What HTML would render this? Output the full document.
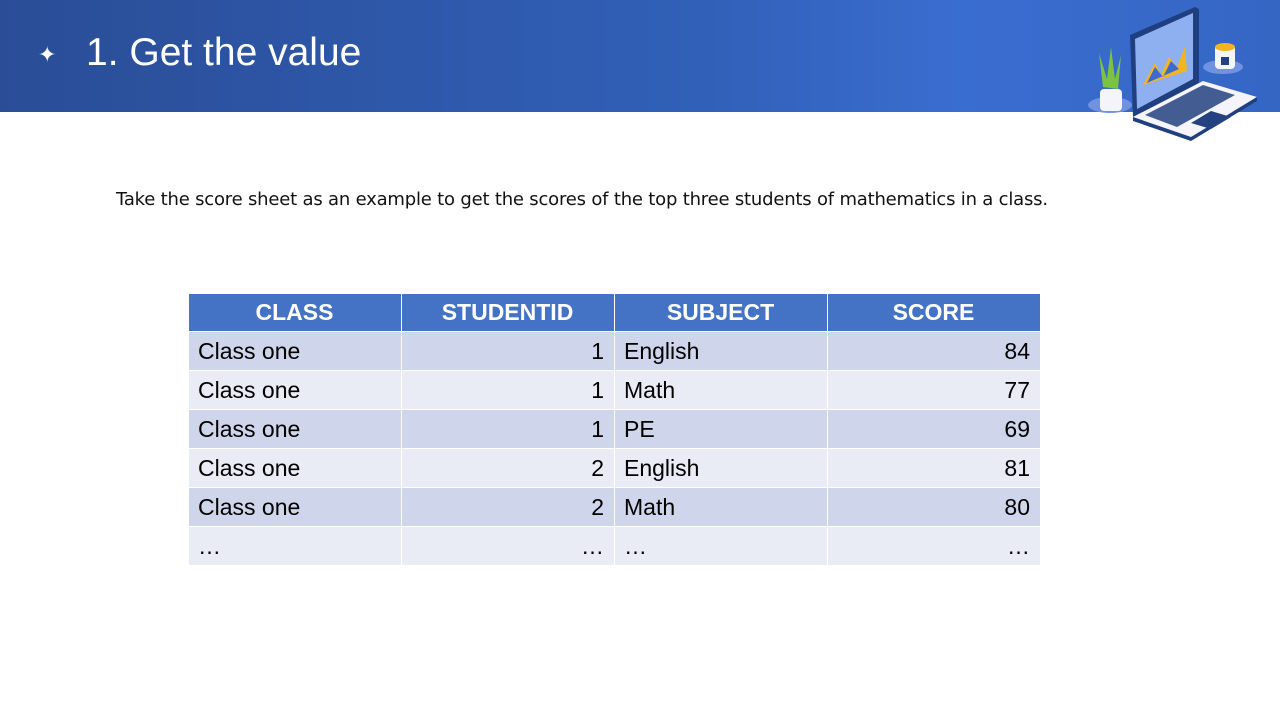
<!DOCTYPE html>
<html><head><meta charset="utf-8"><style>
body{margin:0;width:1280px;height:720px;background:#fff;position:relative;overflow:hidden;font-family:"Liberation Sans",sans-serif}
.hdr{position:absolute;left:0;top:0;width:1280px;height:112px;background:linear-gradient(90deg,#2a4d96 0%,#3160b8 55%,#3a6dd0 75%,#3566c4 100%)}
.title{position:absolute;left:86px;top:31px;color:#fff;font-size:39px;font-family:"Liberation Sans",sans-serif}
.star{position:absolute;left:38px;top:42px;color:#fff;font-size:22px}
.desc{position:absolute;left:116px;top:189px;font-size:18px;color:#111;font-family:"DejaVu Sans","Liberation Sans",sans-serif;letter-spacing:-0.2px}
table{position:absolute;left:188px;top:293px;border-collapse:collapse;font-size:23px;color:#000}
td,th{width:213px;height:39px;padding:0 10px 0 9px;box-sizing:border-box;border:1px solid #fff;line-height:37px}
th{background:#4472c4;color:#fff;font-weight:bold;height:38px;text-align:center}
tr.a td{background:#cfd5ea}tr.b td{background:#e9ebf5}
.r{text-align:right}
</style></head><body>
<div class="hdr"></div>
<div class="star">✦</div>
<div class="title">1. Get the value</div>
<svg style="position:absolute;left:1085px;top:5px" width="175" height="140" viewBox="0 0 175 140">
<ellipse cx="25" cy="100" rx="22" ry="8" fill="#6f93e0"/>
<ellipse cx="138" cy="62" rx="20" ry="7" fill="#6f93e0"/>
<path d="M18 82 L14 48 L22 74 L26 42 L30 74 L36 50 L33 84Z" fill="#7cc243"/>
<rect x="15" y="84" width="22" height="22" rx="4" fill="#f4f4fa"/>
<path d="M45 30 L110 2 L114 4 L114 78 L48 112Z" fill="#1f3f80"/>
<path d="M50 34 L108 8 L108 74 L52 104Z" fill="#8fb0f0"/>
<path d="M58 80 L70 58 L76 70 L84 52 L92 62 L100 42 L102 66Z" fill="#f2b521"/>
<path d="M62 78 L70 62 L78 72 L86 56 L94 64Z" fill="#3e6ad0"/>
<path d="M48 112 L118 76 L172 92 L106 132Z" fill="#f4f4fa"/>
<path d="M106 132 L172 92 L172 96 L106 136 L48 116 L48 112Z" fill="#1f3f80"/>
<path d="M60 110 L118 80 L150 90 L92 122Z" fill="#23427f" opacity="0.85"/>
<path d="M106 118 L126 106 L146 112 L126 124Z" fill="#23427f"/>
<rect x="130" y="40" width="20" height="24" rx="4" fill="#f4f4fa"/>
<ellipse cx="140" cy="42" rx="10" ry="4" fill="#f2b521"/>
<rect x="136" y="52" width="8" height="8" fill="#23427f"/>
</svg>
<div class="desc">Take the score sheet as an example to get the scores of the top three students of mathematics in a class.</div>
<table>
<tr><th>CLASS</th><th>STUDENTID</th><th>SUBJECT</th><th>SCORE</th></tr>
<tr class="a"><td>Class one</td><td class="r">1</td><td>English</td><td class="r">84</td></tr>
<tr class="b"><td>Class one</td><td class="r">1</td><td>Math</td><td class="r">77</td></tr>
<tr class="a"><td>Class one</td><td class="r">1</td><td>PE</td><td class="r">69</td></tr>
<tr class="b"><td>Class one</td><td class="r">2</td><td>English</td><td class="r">81</td></tr>
<tr class="a"><td>Class one</td><td class="r">2</td><td>Math</td><td class="r">80</td></tr>
<tr class="b"><td>…</td><td class="r">…</td><td>…</td><td class="r">…</td></tr>
</table>
</body></html>
